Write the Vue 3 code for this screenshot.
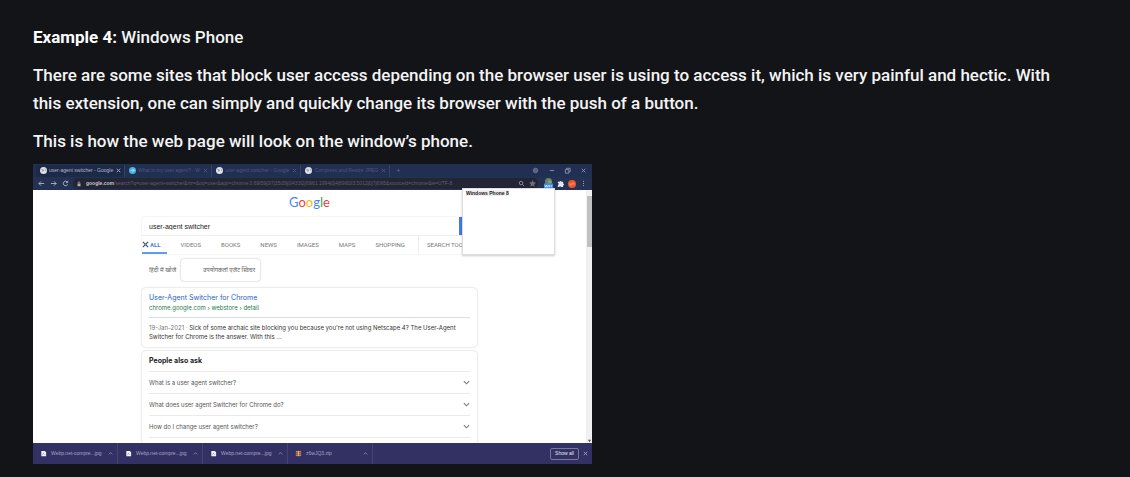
<script setup>
const tabs = [
  { title: 'user-agent switcher - Google', icon: 'globe', active: true },
  { title: 'What is my user agent? - W', icon: 'blue' },
  { title: 'user-agent switcher - Google', icon: 'globe' },
  { title: 'Compress and Resize JPEG', icon: 'globe' },
]
const filters = ['VIDEOS', 'BOOKS', 'NEWS', 'IMAGES', 'MAPS', 'SHOPPING']
const questions = [
  'What is a user agent switcher?',
  'What does user agent Switcher for Chrome do?',
  'How do I change user agent switcher?',
]
const downloads = [
  { name: 'Webp.net-compre...jpg' },
  { name: 'Webp.net-compre...jpg' },
  { name: 'Webp.net-compre...jpg' },
  { name: 'z6wJQ3.zip', zip: true },
]
const logo = ['G', 'o', 'o', 'g', 'l', 'e']
</script>

<template>
  <main class="article">
    <p><strong>Example 4:</strong> Windows Phone</p>
    <p>There are some sites that block user access depending on the browser user is using to access it, which is very painful and hectic. With this extension, one can simply and quickly change its browser with the push of a button.</p>
    <p>This is how the web page will look on the window’s phone.</p>

    <section class="browser" aria-label="Browser window">
      <div class="tabstrip">
        <div v-for="(t, i) in tabs" :key="i" class="tab" :class="{ active: t.active }">
          <svg class="fav" viewBox="0 0 12 12">
            <circle cx="6" cy="6" r="6" :fill="t.icon === 'blue' ? '#4bb4dc' : '#dde2e6'" />
            <path v-if="t.icon === 'blue'" d="M3 6h6M6 3l3 3-3 3" stroke="#a5dff0" stroke-width="1.5" fill="none" />
            <path v-else d="M2 3l4 1 1 3-3 1zM8 2l3 3-2 2z" fill="#9aa6b2" />
          </svg>
          <span class="tab-title">{{ t.title }}</span>
          <button class="icon-btn" aria-label="Close tab"><svg viewBox="0 0 8 8"><path d="M2 2l4 4M6 2L2 6" /></svg></button>
        </div>
        <button class="icon-btn add" aria-label="New tab"><svg viewBox="0 0 8 8"><path d="M4 2v4M2 4h4" /></svg></button>
        <div class="window-controls">
          <svg viewBox="0 0 8 8"><circle cx="4" cy="4" r="2.6" fill="#5a6480" stroke="#68728c" /></svg>
          <button class="icon-btn" aria-label="Minimize"><svg viewBox="0 0 8 8"><path d="M2 4h5" /></svg></button>
          <button class="icon-btn" aria-label="Restore"><svg viewBox="0 0 8 8"><path d="M1.500 3h4v4h-4zM3 3V1.500h4v4H5.500" /></svg></button>
          <button class="icon-btn" aria-label="Close"><svg viewBox="0 0 8 8"><path d="M2 2l4 4M6 2L2 6" /></svg></button>
        </div>
      </div>

      <div class="toolbar">
        <div class="nav">
          <button class="icon-btn" aria-label="Back"><svg viewBox="0 0 8 8"><path d="M7 4H1M3.500 1.500L1 4l2.500 2.500" /></svg></button>
          <button class="icon-btn" aria-label="Forward"><svg viewBox="0 0 8 8"><path d="M1 4h6M4.500 1.500L7 4 4.500 6.500" /></svg></button>
          <button class="icon-btn" aria-label="Reload"><svg viewBox="0 0 8 8"><path d="M6 2.200A2.600 2.600 0 1 0 6.500 5M6.500 1v2H4.500" /></svg></button>
        </div>
        <div class="address">
          <svg class="lock" viewBox="0 0 8 8"><path d="M2 3.500h4V7H2z" fill="#a9abb6" /><path d="M3 3.500V2a1 1 0 0 1 2 0v1.500" fill="none" stroke="#a9abb6" /></svg>
          <span class="url"><b>google.com</b>/search?q=user-agent+switcher&amp;rlz=&amp;oq=user&amp;aqs=chrome.0.69i59j0l7j35i39j0i433l2j69i61.1994j0j4j69i60l3.5012j0j7j69i5&amp;sourceid=chrome&amp;ie=UTF-8</span>
          <svg viewBox="0 0 8 8"><circle cx="3.500" cy="3.500" r="2" fill="none" stroke="#8f93a2" /><path d="M5 5l2 2" stroke="#8f93a2" /></svg>
          <svg viewBox="0 0 8 8"><path d="M4 0l1.200 2.600 2.800.3-2.100 1.900.6 2.800L4 6.200 1.500 7.600l.6-2.800L0 2.900l2.800-.3z" fill="#6c6e7c" /></svg>
        </div>
        <div class="extensions">
          <svg class="agent" viewBox="0 0 10 12"><circle cx="5" cy="4" r="4" fill="#64816f" /><path d="M5 1l4 4-4 1z" fill="#98a35d" /><path d="M0 6h10v6H0z" fill="#3d91ee" /><path d="M1 8l1 2 1-2 1 2 1-2M6 8v2M8 8v2" stroke="#dcecff" fill="none" /></svg>
          <svg viewBox="0 0 8 8"><path d="M1 2h2a1 1 0 1 1 2 0h2v2a1 1 0 1 1 0 2v2H4.500a1 1 0 0 0-2 0H1V5.500a1 1 0 0 0 0-2z" fill="#e3e7f0" /></svg>
          <svg viewBox="0 0 8 8"><circle cx="4" cy="4" r="4" fill="#ee552a" /><path d="M2 3v2h2V3h2v2" fill="none" stroke="#f6a186" stroke-width=".7" /></svg>
          <svg viewBox="0 0 8 8"><path d="M4 1v1M4 3.500v1M4 6v1" stroke="#bdc4d5" /></svg>
        </div>
        <div class="popup"><span>Windows Phone 8</span></div>
      </div>

      <div class="page">
        <div class="content">
          <h1 class="logo"><span v-for="(c, i) in logo" :key="i" :class="'l' + i">{{ c }}</span></h1>
          <div class="search-card">
            <form class="search" @submit.prevent>
              <input aria-label="Search" type="text" value="user-agent switcher" />
              <button aria-label="Google Search"></button>
            </form>
            <nav class="filters">
              <a href="#" class="all"><svg viewBox="0 0 8 8"><path d="M1 1l6 6M7 1L1 7" fill="none" stroke="#4a5569" stroke-width="1.500" /><circle cx="4" cy="4" r="1" fill="#4285e4" /></svg>ALL</a>
              <a v-for="f in filters" :key="f" href="#">{{ f }}</a>
              <a href="#" class="tools">SEARCH TOOLS</a>
            </nav>
          </div>
          <div class="languages"><span>हिंदी में खोजें</span><button>उपयोगकर्ता एजेंट स्विचर</button></div>
          <article class="card result">
            <a href="#">User-Agent Switcher for Chrome</a>
            <cite>chrome.google.com › webstore › detail</cite>
            <p><time>19-Jan-2021 · </time>Sick of some archaic site blocking you because you're not using Netscape 4? The User-Agent Switcher for Chrome is the answer. With this ...</p>
          </article>
          <section class="card ask">
            <h2>People also ask</h2>
            <button v-for="q in questions" :key="q">{{ q }}<svg viewBox="0 0 8 8"><path d="M1 2.500l3 3 3-3" fill="none" stroke="#777" stroke-width="1.200" /></svg></button>
            <div class="more"></div>
          </section>
        </div>
        <div class="scrollbar"><i></i><svg viewBox="0 0 6 6"><path d="M1 2h4L3 5z" fill="#555" /></svg></div>
      </div>

      <footer class="downloads">
        <div v-for="(d, i) in downloads" :key="i" class="download">
          <svg v-if="d.zip" viewBox="0 0 8 8"><path d="M1 1h6v6H1z" fill="#c28248" /><path d="M1 3h6M1 5h6" stroke="#705080" /><path d="M4 1v6" stroke="#e5bb61" /></svg>
          <svg v-else viewBox="0 0 8 8"><path d="M1.500 1h4L7 2.500V7H1.500z" fill="#edf1fc" /><path d="M3 5l1-1 1 1" fill="none" stroke="#6879af" /></svg>
          <span>{{ d.name }}</span>
          <button class="icon-btn" aria-label="Download options"><svg viewBox="0 0 8 8"><path d="M2 5l2-2 2 2" /></svg></button>
        </div>
        <button class="show-all">Show all</button>
        <button class="icon-btn" aria-label="Close downloads"><svg viewBox="0 0 8 8"><path d="M2 2l4 4M6 2L2 6" /></svg></button>
      </footer>
    </section>
  </main>
</template>

<style>
html { background: #131418; }
body { margin: 0; }
</style>

<style scoped>
* { box-sizing: border-box; }
.article { padding: 23px 66px 13px 33px; color: #f4f4f5; font: 500 17px/28px Roboto, sans-serif; }
.article > p { margin: 0 0 10px; }
.article > p:nth-of-type(3) { margin-bottom: 9px; }
strong { font-weight: 700; color: #fff; }
svg { display: block; width: 7px; height: 7px; flex: none; }
button { font: inherit; color: inherit; padding: 0; border: 0; background: none; }
a { color: inherit; text-decoration: none; }
.browser { width: 100%; max-width: 559px; font: 6px/9px Inter, "Liberation Sans", sans-serif; color: #333; background: #fff; }
.icon-btn { display: block; flex: none; }
.icon-btn svg { fill: none; stroke: currentColor; stroke-width: 1; }
.tabstrip, .toolbar, .downloads { font: 5px/9px "Liberation Sans", Arial, sans-serif; }
.tabstrip { display: flex; align-items: center; height: 13px; padding: 0 5px 0 3px; background: #213052; color: #4d5875; }
.tab { display: flex; align-items: center; flex: 0 0 87px; height: 12px; padding: 0 2px 0 4px; gap: 2px; border-right: 1px solid #35435f; }
.tab-title { flex: 1; white-space: nowrap; }
.tab.active { color: #b4b9c6; background: #1c2948; }
.add { margin-left: 5px; }
.window-controls { display: flex; gap: 9px; margin-left: auto; color: #8d96ab; }
.toolbar { position: relative; display: flex; align-items: center; height: 13px; padding: 0 5px; background: #253150; color: #a6bdd8; }
.nav { display: flex; gap: 5px; }
.address { display: flex; align-items: center; flex: 1; min-width: 0; gap: 4px; height: 11px; margin: 0 6px 0 4px; padding: 0 2px 0 3px; border-radius: 5px; background: #242534; color: #5c5d6e; }
.lock { width: 6px; height: 6px; }
.url { flex: 1; white-space: nowrap; }
.url b { color: #c5c5ce; font-weight: 700; }
.extensions { display: flex; align-items: center; gap: 4px; }
.agent { width: 9px; height: 11px; }
.extensions svg:nth-child(3) { width: 8px; height: 8px; }
.popup { position: absolute; top: 11px; right: 37px; width: 93px; height: 67px; padding: 1px 3px; background: #fff; border: 1px solid #ddd; box-shadow: 0 1px 2px #0003; color: #222; font-weight: 700; line-height: 7px; }
.popup span { background: #eee; }
.page { display: flex; justify-content: space-between; overflow: hidden; }
.content { flex: 0 1 335px; min-width: 0; margin-left: 109px; }
.logo { margin: 0; height: 27px; font: 400 13px/24px Lato, sans-serif; text-align: center; }
.l0, .l3 { color: #4285f4; }
.l1, .l5 { color: #ea4335; }
.l2 { color: #fbbc05; }
.l4 { color: #34a853; }
.search-card { box-shadow: 0 0 2px #0002; border-radius: 3px 3px 0 0; }
.search { display: flex; height: 19px; border-bottom: 1px solid #eee; }
.search input { flex: 1; min-width: 0; padding: 0 7px; border: 0; outline: 0; background: none; color: #222; font: 7px "Liberation Sans", Arial, sans-serif; }
.search button { width: 18px; background: #4478e4; }
.filters { display: flex; align-items: stretch; gap: 20px; height: 18px; overflow: hidden; white-space: nowrap; color: #777; font-family: Roboto, sans-serif; line-height: 17px; }
.all { display: flex; align-items: center; gap: 1px; border-bottom: 2px solid #619be9; color: #4285e4; font-weight: 700; padding-right: 6px; margin-right: -6px; }
.tools { padding-left: 8px; margin-left: -7px; border-left: 1px solid #eee; }
.languages { display: flex; align-items: center; margin-top: 5px; height: 22px; padding-left: 7px; gap: 5px; color: #666; font-family: "Noto Sans", "Liberation Sans", sans-serif; white-space: nowrap; }
.languages button { width: 79px; height: 22px; padding-right: 5px; text-align: right; border-radius: 3px; box-shadow: 0 0 2px #0005; }
.card { padding: 0 7px; border-radius: 4px; box-shadow: 0 0 2px #0004; }
.result { height: 59px; margin-top: 7px; padding-top: 5px; }
.result a { display: block; font-size: 7px; line-height: 10px; color: #2862c4; }
.result cite { display: block; padding-bottom: 5px; border-bottom: 1px solid #ddd; color: #237a45; font-style: normal; }
.result p { margin: 5px 0 0; padding-right: 12px; }
.result time { color: #777; }
.ask { margin-top: 4px; border-radius: 4px 4px 0 0; }
.ask h2 { margin: 0; font-size: 7px; font-weight: 700; line-height: 20px; color: #222; }
.ask button { display: flex; align-items: center; justify-content: space-between; width: 100%; height: 22px; border-top: 1px solid #e9e9e9; color: #555; }
.more { height: 6px; border-top: 1px solid #e9e9e9; }
.scrollbar { display: flex; flex-direction: column; align-items: center; justify-content: space-between; width: 6px; padding-top: 6px; background: #f1f1f1; }
.scrollbar i { width: 5px; height: 51px; background: #c1c1c1; }
.scrollbar svg { width: 5px; height: 5px; }
.downloads { display: flex; align-items: center; height: 21px; padding: 0 3px 0 0; background: #333063; color: #a5a5c4; }
.download { display: flex; align-items: center; flex: 0 1 85px; height: 21px; padding: 0 3px 0 7px; gap: 4px; border-right: 1px solid #464475; }
.download span { flex: 1; white-space: nowrap; }
.download .icon-btn { color: #8583aa; }
.show-all { margin-left: auto; margin-right: 3px; width: 29px; height: 12px; border: 1px solid #77769b; border-radius: 2px; color: #e6e6f0; }
</style>
